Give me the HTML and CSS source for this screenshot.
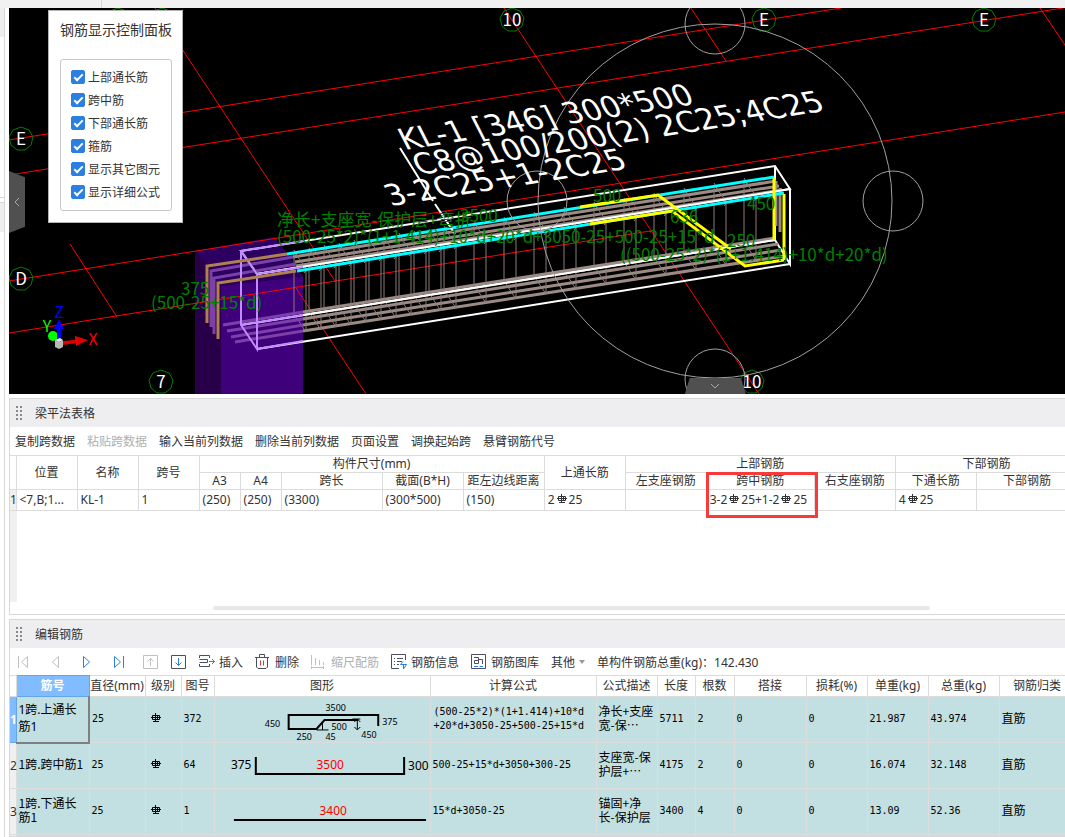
FILE: index.html
```html
<!DOCTYPE html>
<html lang="zh-CN">
  <head>
    <meta charset="UTF-8" />
    <meta name="viewport" content="width=device-width, initial-scale=1.0" />
    <title>钢筋三维</title>
    <link rel="stylesheet" href="styles.css">
  </head>
  <body>
    <svg class="sprite" aria-hidden="true">
      <symbol id="rebar" viewBox="0 0 10 10">
        <path d="M4.500 0V9M6.500 2V7M1.500 2.500H8.500V6.500H1.500ZM0 4.500H10M2 8.500H8" fill="none" stroke="currentColor" />
      </symbol>
      <symbol id="bubble" viewBox="-13 -13 26 26">
        <polygon points="0,-12 8,-9 12,-2 10,6 4,11 -4,11 -10,6 -12,-2 -8,-9" fill="none" stroke="#008000" />
      </symbol>
    </svg>

    <div class="top-strip"></div>
    <div class="app">
      <div class="gutter">
        <div class="gutter-box gutter-box-first"></div>
        <div class="gutter-box gutter-box-second"></div>
      </div>

      <main class="main">
        <!-- 三维视图 -->
        <section class="viewport">
          <svg class="scene" viewBox="9 8 1056 386" preserveAspectRatio="xMinYMin slice">
            <!-- 柱 -->
            <path d="M195 251L221 286V394H195Z" fill="#28004a" />
            <path d="M195 251L275 237L303 276L221 286Z" fill="#2b0060" />
            <path d="M221 286L303 276V394H221Z" fill="#3e007b" />

            <!-- 轴网 -->
            <g class="axis-lines">
              <path d="M9 140L841 8M9 175L1063 8M9 281L1065 112M9 333L650 231" />
              <path d="M155 8L335 281M296 288L366 394M70 244L117 317M504 8L759 394M691 8L726 61M1040 8L1065 45" />
            </g>
            <g>
              <use href="#bubble" x="8" y="126" width="26" height="26" />
              <use href="#bubble" x="8" y="266" width="26" height="26" />
              <use href="#bubble" x="148" y="369" width="26" height="26" />
              <use href="#bubble" x="105" y="7" width="26" height="26" />
              <use href="#bubble" x="149" y="7" width="26" height="26" />
              <use href="#bubble" x="499" y="7" width="26" height="26" />
              <use href="#bubble" x="751" y="7" width="26" height="26" />
              <use href="#bubble" x="971" y="7" width="26" height="26" />
              <use href="#bubble" x="739" y="369" width="26" height="26" />
            </g>
            <g class="axis-names">
              <text x="21" y="145">E</text>
              <text x="21" y="285">D</text>
              <text x="161" y="388">7</text>
              <text x="512" y="26">10</text>
              <text x="764" y="26">E</text>
              <text x="984" y="26">E</text>
              <text x="752" y="388">10</text>
            </g>

            <!-- 梁轮廓 -->
            <path class="beam" d="M241 251L775 166L790 189L257 274ZM775 166V240L790 264V189M241 325L775 240M257 349L790 264" />

            <!-- 钢筋 -->
            <g class="bars">
              <path d="M293 257L776 181M295 262L779 186M296 266L782 190M776 181V226M780 188V232" />
              <path d="M303 312L775 238M303 319L778 244M303 325L781 250M303 331L784 256" />
            </g>
            <path class="stirrups" id="stirrups" />
            <path class="beam" d="M257 274L790 189M303 315L775 240" />
            <g class="purple-bars">
              <path d="M293 257L211 271V327M296 264L214 278V334" />
              <path d="M223 325L303 312M227 331L303 319M231 337L303 325M235 342L303 331" />
            </g>
            <path class="beam-in-column" d="M303 241L241 251L257 274L303 267M241 251V325L257 349V274M303 341L257 349M241 325L303 315" />
            <g class="brown-bars">
              <path d="M287 254L207 266V323M296 271L218 283V339" />
            </g>
            <path class="cyan-bars" d="M287 254L774 177M297 271L784 193" />
            <g class="yellow-bars">
              <path d="M580 207L658 195L731 249M590 224L672 211L745 266L784 260" />
              <path d="M774 178V240M784 194V260" />
            </g>

            <!-- 旋转球 -->
            <g class="orbit">
              <circle cx="715" cy="201" r="177" />
              <circle cx="537" cy="201" r="30" />
              <circle cx="893" cy="201" r="30" />
              <circle cx="715" cy="24" r="30" />
              <circle cx="715" cy="379" r="30" />
            </g>

            <!-- 集中标注 -->
            <path class="beam" d="M400 148L433 201M435 204L455 234" />
            <g class="beam-label">
              <text transform="translate(405 150) rotate(-9) skewX(18)">KL-1 [346] 300*500</text>
              <text transform="translate(419 175) rotate(-9) skewX(18)">C8@100/200(2) 2C25;4C25</text>
              <text transform="translate(391 206) rotate(-9) skewX(18)">3-2C25+1-2C25</text>
            </g>

            <!-- 计算公式标注 -->
            <g class="formula">
              <text x="277" y="226">净长+支座宽-保护层+弯折</text>
              <text x="460" y="222">3500</text>
              <text x="277" y="243">(500-25*2)*(1+1.414)+10*d+20*d+3050-25+500-25+15*d</text>
              <text x="593" y="202">500</text>
              <text x="670" y="223">636</text>
              <text x="747" y="210">450</text>
              <text x="727" y="247">250</text>
              <text x="620" y="261">((500-25*2)*(1+1.414)+10*d+20*d)</text>
              <text x="181" y="295">375</text>
              <text x="151" y="309">(500-25+15*d)</text>
            </g>

            <!-- 坐标轴 -->
            <circle cx="53" cy="336" r="5" fill="#0f0" />
            <path d="M57 343V329H54L59 319L64 329H61V343Z" fill="#00f" />
            <path d="M63 341L75 340V336L88 340L76 346V343L63 345Z" fill="#e00000" />
            <path d="M55 340L59 342L63 340V347L59 349L55 347Z" fill="#b8b8b8" />
            <path d="M55 340L60 338L63 340L59 342Z" fill="#e8e8e8" />
            <g class="axes-names">
              <text x="47" y="332" fill="#0f0">Y</text>
              <text x="59" y="318" fill="#00f">Z</text>
              <text x="93" y="345" fill="#f00">X</text>
            </g>
          </svg>

          <button class="handle handle-left" type="button" aria-label="收起左侧">
            <svg viewBox="0 0 8 10" width="8" height="10"><path d="M6 1L2 5L6 9" /></svg>
          </button>
          <button class="handle handle-bottom" type="button" aria-label="收起下方">
            <svg viewBox="0 0 10 8" width="10" height="8"><path d="M1 2L5 6L9 2" /></svg>
          </button>

          <div class="display-panel">
            <h2>钢筋显示控制面板</h2>
            <div class="display-options">
              <label><input type="checkbox" checked>上部通长筋</label>
              <label><input type="checkbox" checked>跨中筋</label>
              <label><input type="checkbox" checked>下部通长筋</label>
              <label><input type="checkbox" checked>箍筋</label>
              <label><input type="checkbox" checked>显示其它图元</label>
              <label><input type="checkbox" checked>显示详细公式</label>
            </div>
          </div>
        </section>

        <!-- 梁平法表格 -->
        <section class="panel">
          <header class="panel-header">
            <span class="grip"></span>
            <h2>梁平法表格</h2>
          </header>
          <div class="toolbar">
            <button type="button">复制跨数据</button>
            <button type="button" disabled>粘贴跨数据</button>
            <button type="button">输入当前列数据</button>
            <button type="button">删除当前列数据</button>
            <button type="button">页面设置</button>
            <button type="button">调换起始跨</button>
            <button type="button">悬臂钢筋代号</button>
          </div>
          <div class="grid-wrap">
            <table class="grid beam-grid">
              <colgroup>
                <col class="w6"><col class="w61"><col class="w61"><col class="w61">
                <col class="w41"><col class="w41"><col class="w101"><col class="w81">
                <col class="w81"><col class="w81"><col class="w81"><col class="w108">
                <col class="w81"><col class="w81"><col class="w101">
              </colgroup>
              <thead>
                <tr>
                  <th rowspan="2"></th>
                  <th rowspan="2">位置</th>
                  <th rowspan="2">名称</th>
                  <th rowspan="2">跨号</th>
                  <th colspan="5">构件尺寸(mm)</th>
                  <th rowspan="2">上通长筋</th>
                  <th colspan="3">上部钢筋</th>
                  <th colspan="2">下部钢筋</th>
                </tr>
                <tr>
                  <th>A3</th>
                  <th>A4</th>
                  <th>跨长</th>
                  <th>截面(B*H)</th>
                  <th>距左边线距离</th>
                  <th>左支座钢筋</th>
                  <th>跨中钢筋</th>
                  <th>右支座钢筋</th>
                  <th>下通长筋</th>
                  <th>下部钢筋</th>
                </tr>
              </thead>
              <tbody>
                <tr>
                  <th>1</th>
                  <td>&lt;7,B;1...</td>
                  <td>KL-1</td>
                  <td>1</td>
                  <td>(250)</td>
                  <td>(250)</td>
                  <td>(3300)</td>
                  <td>(300*500)</td>
                  <td>(150)</td>
                  <td>2<svg class="rebar"><use href="#rebar" /></svg>25</td>
                  <td></td>
                  <td class="marked">3-2<svg class="rebar"><use href="#rebar" /></svg>25+1-2<svg class="rebar"><use href="#rebar" /></svg>25</td>
                  <td></td>
                  <td>4<svg class="rebar"><use href="#rebar" /></svg>25</td>
                  <td></td>
                </tr>
              </tbody>
            </table>
            <div class="row-head-rest"></div>
          </div>
          <div class="scroll-track"><div class="scroll-thumb"></div></div>
        </section>

        <!-- 编辑钢筋 -->
        <section class="panel">
          <header class="panel-header">
            <span class="grip"></span>
            <h2>编辑钢筋</h2>
          </header>
          <div class="toolbar edit-toolbar">
            <div class="nav-buttons">
              <button type="button" aria-label="首行" disabled><svg class="icon" viewBox="0 0 16 16"><path d="M3.500 2V14M12.500 2.500V13.500L6.500 8Z" /></svg></button>
              <button type="button" aria-label="上一行" disabled><svg class="icon" viewBox="0 0 16 16"><path d="M11.500 2.500V13.500L5.500 8Z" /></svg></button>
              <button type="button" aria-label="下一行"><svg class="icon blue" viewBox="0 0 16 16"><path d="M4.500 2.500V13.500L10.500 8Z" /></svg></button>
              <button type="button" aria-label="末行"><svg class="icon blue" viewBox="0 0 16 16"><path d="M12.500 2V14M3.500 2.500V13.500L9.500 8Z" /></svg></button>
              <button type="button" aria-label="上移" disabled><svg class="icon" viewBox="0 0 16 16"><path d="M.5 1.500H14.500V14.500H.5ZM7.500 12V4.500M4.500 7.500L7.500 4.500L10.500 7.500" /></svg></button>
            </div>
            <button type="button" aria-label="下移"><svg class="icon" viewBox="0 0 16 16"><path d="M.5 1.500H14.500V14.500H.5Z" /><path class="blue" d="M7.500 4V11.500M4.500 8.500L7.500 11.500L10.500 8.500" /></svg></button>
            <button type="button"><svg class="icon" viewBox="0 0 16 16"><path d="M10.500 4V1.500H.5V4M.5 5.500H8.500V8.500H.5M.5 10V12.500H10.500V10" /><path class="blue" d="M10 7.500H15.500M13 5L15.500 7.500L13 10" /></svg>插入</button>
            <button type="button"><svg class="icon" viewBox="0 0 16 16"><path d="M0 3.500H14M4.500 3V.5H9.500V3M1.500 4V13L3 14.500H11L12.500 13V4" /><path class="red" d="M5.500 6.500V11.500M8.500 6.500V11.500" /></svg>删除</button>
            <button type="button" disabled><svg class="icon" viewBox="0 0 16 16"><path d="M.5 1V11M4.500 4V11M8.500 6V11M12.500 8V11M0 13.500H13M.5 12V15M12.500 12V15" /></svg>缩尺配筋</button>
            <button type="button"><svg class="icon" viewBox="0 0 16 16"><path d="M14.500 6V.5H.5V14.500H8M3 4.500H4M6 4.500H12M3 7.500H4M6 7.500H11M3 10.500H4M6 10.500H8" /><path class="blue" d="M12 7.500L9.500 10.500H15.500L13 14.500M12.500 10.500V15" /></svg>钢筋信息</button>
            <button type="button"><svg class="icon" viewBox="0 0 16 16"><path d="M.5 .5H14.500V14.500H.5ZM3 3.500H7.500V9.500H3.500V6.500H7.500M7.500 5.500H11.500V10" /><path class="blue" d="M3 12.500H7M8.500 12.500H12" /></svg>钢筋图库</button>
            <button type="button" class="menu-button">其他<svg viewBox="0 0 6 4" width="6" height="4"><path d="M0 0H6L3 4Z" fill="#999" /></svg></button>
            <span>单构件钢筋总重(kg)：142.430</span>
          </div>
          <div class="grid-wrap">
            <table class="grid rebar-grid">
              <colgroup>
                <col class="w6"><col class="w73"><col class="w56"><col class="w36">
                <col class="w33"><col class="w216"><col class="w166"><col class="w61">
                <col class="w38"><col class="w39"><col class="w72"><col class="w61">
                <col class="w61"><col class="w71"><col class="w76">
              </colgroup>
              <thead>
                <tr>
                  <th></th>
                  <th class="active">筋号</th>
                  <th>直径(mm)</th>
                  <th>级别</th>
                  <th>图号</th>
                  <th>图形</th>
                  <th>计算公式</th>
                  <th>公式描述</th>
                  <th>长度</th>
                  <th>根数</th>
                  <th>搭接</th>
                  <th>损耗(%)</th>
                  <th>单重(kg)</th>
                  <th>总重(kg)</th>
                  <th>钢筋归类</th>
                </tr>
              </thead>
              <tbody>
                <tr>
                  <th class="active">1</th>
                  <td class="name selected">1跨.上通长<br>筋1</td>
                  <td>25</td>
                  <td class="grade"><svg class="rebar"><use href="#rebar" /></svg></td>
                  <td>372</td>
                  <td class="shape">
                    <svg viewBox="0 0 216 45">
                      <path class="bar" d="M164 29V18H74V32H102L110 23H144" />
                      <path d="M102 33H114M108 26V33M143 22V32M140 25L143 22L146 25M140 30L143 33L146 30M138 22H146" class="thin" />
                      <g class="small">
                        <text x="111" y="14">3500</text>
                        <text x="50" y="30">450</text>
                        <text x="117" y="33">500</text>
                        <text x="82" y="43">250</text>
                        <text x="111" y="43">45</text>
                        <text x="168" y="28">375</text>
                        <text x="147" y="41">450</text>
                      </g>
                    </svg>
                  </td>
                  <td class="first-formula">(500-25*2)*(1+1.414)+10*d<br>+20*d+3050-25+500-25+15*d</td>
                  <td class="cjk">净长+支座<br>宽-保⋯</td>
                  <td>5711</td>
                  <td>2</td>
                  <td>0</td>
                  <td>0</td>
                  <td>21.987</td>
                  <td>43.974</td>
                  <td class="cjk">直筋</td>
                </tr>
                <tr>
                  <th>2</th>
                  <td class="cjk">1跨.跨中筋1</td>
                  <td>25</td>
                  <td class="grade"><svg class="rebar"><use href="#rebar" /></svg></td>
                  <td>64</td>
                  <td class="shape">
                    <svg viewBox="0 0 216 45">
                      <path class="bar" d="M41 14V31H190V14" />
                      <text x="16" y="26">375</text>
                      <text x="102" y="26" class="length">3500</text>
                      <text x="194" y="27">300</text>
                    </svg>
                  </td>
                  <td>500-25+15*d+3050+300-25</td>
                  <td class="cjk">支座宽-保<br>护层+⋯</td>
                  <td>4175</td>
                  <td>2</td>
                  <td>0</td>
                  <td>0</td>
                  <td>16.074</td>
                  <td>32.148</td>
                  <td class="cjk">直筋</td>
                </tr>
                <tr>
                  <th>3</th>
                  <td class="cjk">1跨.下通长<br>筋1</td>
                  <td>25</td>
                  <td class="grade"><svg class="rebar"><use href="#rebar" /></svg></td>
                  <td>1</td>
                  <td class="shape">
                    <svg viewBox="0 0 216 45">
                      <path class="bar" d="M19 31H212" />
                      <text x="105" y="26" class="length">3400</text>
                    </svg>
                  </td>
                  <td>15*d+3050-25</td>
                  <td class="cjk">锚固+净<br>长-保护层</td>
                  <td>3400</td>
                  <td>4</td>
                  <td>0</td>
                  <td>0</td>
                  <td>13.09</td>
                  <td>52.36</td>
                  <td class="cjk">直筋</td>
                </tr>
                <tr>
                  <th></th>
                  <td></td><td></td><td></td><td></td><td></td><td></td><td></td>
                  <td></td><td></td><td></td><td></td><td></td><td></td><td></td>
                </tr>
              </tbody>
            </table>
          </div>
        </section>
      </main>
    </div>

    <script>
      // 箍筋：加密区间距15，非加密区间距30
      const stirrups = document.getElementById("stirrups");
      let d = "";
      for (let x = 306; x < 775; x += x < 455 ? 15 : 30) {
        const y = Math.round(268 - (x - 306) * 0.159);
        d += `M${x} ${y}V${y + 64}L${x - 12} ${y + 46}V${y - 16}Z`;
        d += `M${x - 2} ${y + 5}L${x + 2} ${y}M${x - 12} ${y - 18}L${x - 8} ${y - 11}`;
      }
      stirrups.setAttribute("d", d);
    </script>
  </body>
</html>
```

FILE: styles.css
```css
*,
*::before,
*::after {
  box-sizing: border-box;
}

body {
  margin: 0;
  height: 100vh;
  display: flex;
  flex-direction: column;
  overflow: hidden;
  background-color: #fff;
  color: #333;
  font-family: "Noto Sans", "Noto Sans CJK SC", sans-serif;
  font-size: 12px;
}

h2 {
  margin: 0;
  font-size: 12px;
  font-weight: normal;
}

button {
  font: inherit;
  color: inherit;
  background: none;
  border: none;
  padding: 0;
  cursor: pointer;
}

button:disabled {
  color: #b0b0b0;
  cursor: default;
}

.sprite {
  position: absolute;
  width: 0;
  height: 0;
}

.top-strip {
  flex: 0 0 8px;
  width: 102px;
  border-right: 1px solid #d8d8d8;
  box-shadow: 0 0 0 100vmax #f1f1f1;
  clip-path: inset(0 -100vw 0 0);
  background-color: #f1f1f1;
}

.app {
  flex: 1;
  min-height: 0;
  display: flex;
  background-color: #fff;
}

.gutter {
  flex: 0 0 5px;
  margin-right: 4px;
  border-right: 1px solid #d8d8d8;
}

.gutter-box {
  background: linear-gradient(#eeeef0 29px, #fff 29px);
  border-bottom: 1px solid #d8d8d8;
}

.gutter-box-first {
  height: 190px;
}

.gutter-box-second {
  height: 100px;
  margin-top: 4px;
  border-top: 1px solid #d8d8d8;
  border-bottom: none;
}

.main {
  flex: 1;
  min-width: 0;
  display: grid;
  grid-template-columns: minmax(0, 1fr);
  grid-template-rows: minmax(0, 386fr) minmax(0, 217fr) minmax(0, 218fr);
  row-gap: 4px;
}

/* 三维视图 */
.viewport {
  position: relative;
  background-color: #000;
}

.scene {
  display: block;
  width: 100%;
  height: 100%;
}

.axis-lines {
  stroke: #f00;
  fill: none;
}

.axis-names {
  fill: #fff;
  font-family: "Noto Sans CJK SC", sans-serif;
  font-size: 17px;
  text-anchor: middle;
}

.axes-names {
  font-family: "Noto Sans CJK SC", sans-serif;
  font-size: 16px;
  text-anchor: middle;
}

.beam {
  stroke: #fff;
  stroke-width: 2;
  fill: none;
}

.beam-in-column {
  stroke: #c08cff;
  stroke-width: 2;
  fill: none;
}

.bars {
  stroke: #9c8b84;
  stroke-width: 3;
  fill: none;
}

.stirrups {
  stroke: #8c7d78;
  fill: none;
}

.purple-bars {
  stroke: #7d40a8;
  stroke-width: 3;
  fill: none;
}

.brown-bars {
  stroke: #b08050;
  stroke-width: 3;
  fill: none;
}

.cyan-bars {
  stroke: #0ff;
  stroke-width: 3;
}

.yellow-bars {
  stroke: #ff0;
  stroke-width: 3;
  fill: none;
}

.orbit {
  stroke: #a0a0a0;
  fill: none;
}

.beam-label {
  fill: #fff;
  font-family: "DejaVu Sans", sans-serif;
  font-size: 30px;
}

.formula {
  fill: #008000;
  font-family: "Noto Sans CJK SC", sans-serif;
  font-size: 17px;
}

.handle {
  position: absolute;
  display: flex;
  align-items: center;
  justify-content: center;
  background-color: #505050;
}

.handle svg {
  fill: none;
  stroke: #aaa;
}

.handle-left {
  left: 0;
  top: 163px;
  width: 16px;
  height: 62px;
  clip-path: polygon(0 0, 100% 10%, 100% 90%, 0 100%);
}

.handle-bottom {
  bottom: 0;
  left: 64%;
  width: 61px;
  height: 16px;
  clip-path: polygon(8% 0, 92% 0, 100% 100%, 0 100%);
}

.display-panel {
  position: absolute;
  left: 39px;
  top: 2px;
  padding: 8px 10px 11px 11px;
  border: 1px solid #b4b4b4;
  background-color: #fff;
}

.display-panel h2 {
  font-size: 14px;
  line-height: 22px;
  margin-bottom: 18px;
}

.display-options {
  display: flex;
  flex-direction: column;
  gap: 7px;
  padding: 9px 10px 10px;
  border: 1px solid #c8c8c8;
  border-radius: 3px;
}

.display-options label {
  display: flex;
  align-items: center;
  gap: 3px;
  height: 16px;
  white-space: nowrap;
}

.display-options input {
  appearance: none;
  display: grid;
  place-items: center;
  width: 14px;
  height: 14px;
  margin: 0;
  border-radius: 2px;
  background-color: #fff;
  border: 1px solid #2a7fe0;
}

.display-options input:checked {
  background-color: #2a7fe0;
}

.display-options input:checked::after {
  content: "";
  width: 5px;
  height: 9px;
  margin-bottom: 2px;
  border: solid #fff;
  border-width: 0 2px 2px 0;
  transform: rotate(45deg);
}

/* 面板 */
.panel {
  display: flex;
  flex-direction: column;
  min-height: 0;
  overflow: hidden;
  border: 1px solid #d8d8d8;
  border-right: none;
}

.panel-header {
  flex: 0 0 28px;
  display: flex;
  align-items: center;
  gap: 12px;
  padding-left: 6px;
  background-color: #eeeef0;
}

.grip {
  width: 7px;
  height: 14px;
  background-image: linear-gradient(90deg, transparent 2px, #eeeef0 2px, #eeeef0 4px, transparent 4px, transparent 6px, #eeeef0 6px),
    repeating-linear-gradient(#888 0, #888 2px, transparent 2px, transparent 4px);
}

.toolbar {
  flex: 0 0 28px;
  display: flex;
  align-items: center;
  gap: 12px;
  padding-left: 5px;
  white-space: nowrap;
}

.edit-toolbar {
  flex-basis: 27px;
}

.toolbar button {
  display: flex;
  align-items: center;
  gap: 4px;
}

.nav-buttons {
  display: flex;
  gap: 16px;
}

.icon {
  width: 16px;
  height: 16px;
  fill: none;
  stroke: #4a5060;
}

button:disabled .icon {
  stroke: #c0c0c0;
}

.icon.blue,
.icon .blue {
  stroke: #2a7fe0;
}

.icon .red {
  stroke: #e03030;
}

/* 表格 */
.grid-wrap {
  flex: 1;
  min-height: 0;
  display: flex;
  flex-direction: column;
  overflow: hidden;
}

.grid {
  flex: none;
  table-layout: fixed;
  border-collapse: collapse;
}

.grid th,
.grid td {
  padding: 0;
  border: 1px solid #dcdcdc;
  font-weight: normal;
  white-space: nowrap;
}

.grid th:first-child,
.grid td:first-child {
  border-left: none;
}

.grid td {
  padding-left: 3px;
  text-align: left;
}

.beam-grid {
  width: 1068px;
}

.beam-grid th {
  height: 17px;
  line-height: 16px;
}

.beam-grid td {
  height: 21px;
  line-height: 20px;
}

.beam-grid tbody th,
.rebar-grid tbody th {
  background-color: #f0f0f0;
}

.row-head-rest {
  flex: 1;
  width: 7px;
  background-color: #f0f0f0;
}

.rebar {
  width: 10px;
  height: 10px;
  margin: 0 2px;
}

.marked {
  position: relative;
}

.marked::after {
  content: "";
  position: absolute;
  left: -1px;
  top: -18px;
  width: 112px;
  height: 46px;
  border: 3px solid #f93a3a;
}

.scroll-track {
  flex: 0 0 12px;
  padding: 4px 0;
}

.scroll-thumb {
  width: 68%;
  height: 4px;
  margin-left: 203px;
  border-radius: 2px;
  background-color: #e8e8e8;
}

.rebar-grid {
  width: 1065px;
}

.rebar-grid thead th {
  height: 21px;
  line-height: 20px;
}

.rebar-grid tbody tr {
  height: 46px;
}

.rebar-grid td {
  padding: 0 0 2px 2px;
  background-color: #c2dfe1;
  color: #000;
  font-family: "DejaVu Sans Mono", monospace;
  font-size: 10px;
  line-height: 14px;
}

.rebar-grid .cjk {
  padding-bottom: 4px;
  font-family: "Noto Sans CJK SC", sans-serif;
  font-size: 12px;
}

.rebar-grid .name {
  font-family: "Noto Sans", "Noto Sans CJK SC", sans-serif;
  font-size: 12px;
  line-height: 17px;
}

.rebar-grid .grade {
  padding: 0 0 0 3px;
}

.rebar-grid .first-formula {
  padding-left: 3px;
}

.rebar-grid .active {
  background-color: #80bcff;
  color: #fff;
  font-weight: bold;
  border-color: #64a4ea;
}

.rebar-grid .selected {
  border-right: 2px solid #808080;
  border-bottom: 2px solid #808080;
}

.rebar-grid .shape {
  padding: 0;
}

.shape svg {
  display: block;
  width: 100%;
  height: 45px;
  overflow: visible;
}

.shape text {
  font-family: "Noto Sans", sans-serif;
  font-size: 12px;
}

.shape .small text {
  font-size: 9px;
}

.shape .length {
  fill: #f00;
}

.shape .bar {
  fill: none;
  stroke: #000;
  stroke-width: 2;
}

.shape .thin {
  fill: none;
  stroke: #000;
}

.w6 { width: 6px; }
.w33 { width: 33px; }
.w36 { width: 36px; }
.w38 { width: 38px; }
.w39 { width: 39px; }
.w41 { width: 41px; }
.w56 { width: 56px; }
.w61 { width: 61px; }
.w71 { width: 71px; }
.w72 { width: 72px; }
.w73 { width: 73px; }
.w76 { width: 76px; }
.w81 { width: 81px; }
.w101 { width: 101px; }
.w108 { width: 108px; }
.w166 { width: 166px; }
.w216 { width: 216px; }
```
